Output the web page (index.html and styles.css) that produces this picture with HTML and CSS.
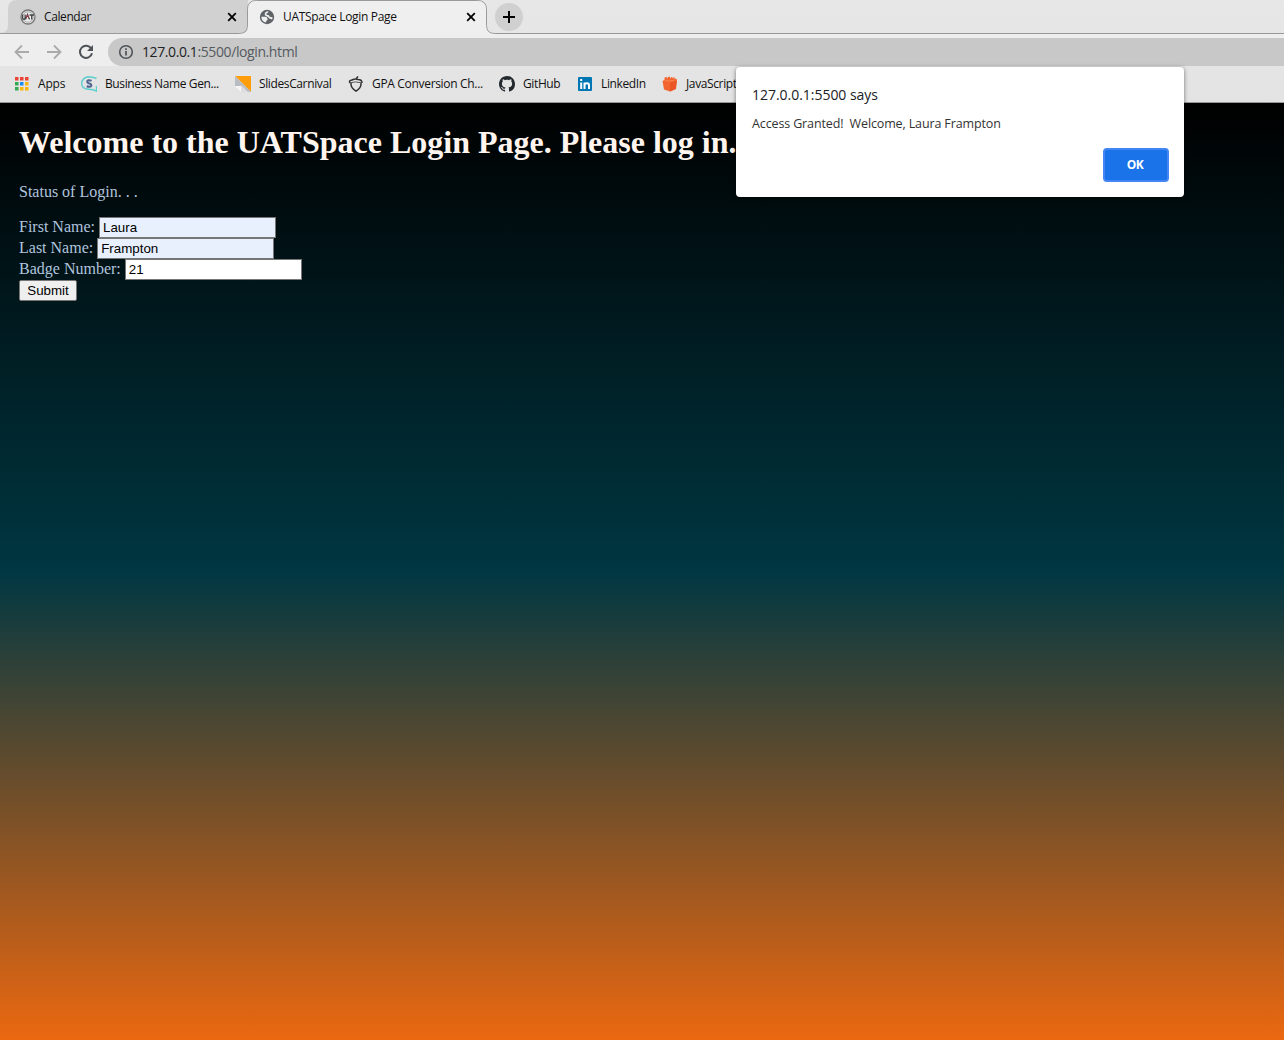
FILE: index.html
```
<!DOCTYPE html>
<html lang="en">
<head>
<meta charset="utf-8">
<title>UATSpace Login Page</title>
<link rel="stylesheet" href="styles.css">
</head>
<body>
<div class="browser">
  <header class="chrome">
    <div class="tabstrip">
      <svg class="tab-shapes" width="1284" height="34" viewBox="0 0 1284 34">
        <path class="tab-idle" d="M0 33Q8 33 8 25V9Q8 0 17 0H248V33Z"/>
        <path class="tab-live" d="M0 33.5H239.500Q247.500 33.500 247.500 25.500V9.500Q247.500 .5 256.500 .5H477.500Q486.500 .5 486.500 9.500V25.500Q486.500 33.500 494.500 33.500H1284"/>
        <path class="tab-fill" d="M240 34Q248 34 248 26V10Q248 1 257 1H477Q486 1 486 10V26Q486 34 494 34Z"/>
      </svg>
      <div class="tab tab-calendar">
        <svg class="fav" width="16" height="16" viewBox="0 0 16 16"><circle cx="8" cy="8" r="7" fill="#eee" stroke="#777" stroke-width="1.300"/><circle cx="8" cy="8" r="5.200" fill="none" stroke="#aaa"/><path d="M2.500 5.500v3q0 2 1.300 2t1.300-2v-3M5.500 10.500l2-5 2 5M9.500 6h4.500M11.700 6v4.500" fill="none" stroke="#454548" stroke-width="1.300"/><path d="M6.500 8.500l1-2.500 1 2.500" fill="none" stroke="#c5374a"/></svg>
        <span class="tab-title t-cal">Calendar</span>
        <svg class="close" width="10" height="10" viewBox="0 0 10 10"><path d="M1.200 1.200l7.600 7.600M8.800 1.200l-7.600 7.600"/></svg>
      </div>
      <div class="tab tab-login">
        <svg class="fav" width="16" height="16" viewBox="0 0 16 16"><circle cx="8" cy="8" r="7.200" fill="#5f6368"/><path fill="#eee" d="M9.300 2.300C9.500 3.600 9 4.200 8 4.300 7 4.400 7.200 5.600 8 5.700 9.800 5.900 10.300 6.400 10.500 7.600 11.300 8.300 12.600 8.200 13.700 8.200 13.700 9 13.400 9.900 13 10.600 11.500 9.800 9.800 9.700 9.200 8.300 8.500 7.200 6.200 7.300 5.800 6 5.300 4 6.900 2.300 9.300 2.300zM2.300 7.700H6C8 7.800 8.900 9.300 8.500 10.700 8.200 11.700 7.300 11.700 7.100 12.300V13.600C4.300 13.200 2.300 10.800 2.300 7.700z"/></svg>
        <span class="tab-title t-login">UATSpace Login Page</span>
        <svg class="close" width="10" height="10" viewBox="0 0 10 10"><path d="M1.200 1.200l7.600 7.600M8.800 1.200l-7.600 7.600"/></svg>
      </div>
      <div class="new-tab"><svg width="12" height="12" viewBox="0 0 12 12"><path d="M6 0v12M0 6h12" stroke="#000" stroke-width="2"/></svg></div>
    </div>
    <div class="toolbar">
      <svg class="nav" width="16" height="16" viewBox="0 0 16 16"><path d="M15 8H2M8 1.500L1.500 8 8 14.500" stroke="#aaa" stroke-width="1.800" fill="none"/></svg>
      <svg class="nav" width="16" height="16" viewBox="0 0 16 16"><path d="M1 8H14M8 1.500L14.500 8 8 14.500" stroke="#aaa" stroke-width="1.800" fill="none"/></svg>
      <svg class="nav" width="16" height="16" viewBox="0 0 16 16"><path d="M13.300 4.700A6.100 6.100 0 1 0 14 9.200" stroke="#4f5358" stroke-width="2" fill="none"/><path d="M15 1v6H9z" fill="#4f5358"/></svg>
      <div class="address">
        <svg width="16" height="16" viewBox="0 0 16 16"><circle cx="8" cy="8" r="6.300" fill="none" stroke="#4f5358" stroke-width="1.600"/><path d="M8 7v4.500M8 4.300v1.600" stroke="#4f5358" stroke-width="1.700"/></svg>
        <span class="url"><span class="host">127.0.0.1</span>:5500/login.html</span>
      </div>
    </div>
    <nav class="bookmarks">
      <a class="bm bm-apps"><svg width="14" height="14" viewBox="0 0 14 14"><path fill="#ea4335" d="M0 0h3.500v3.500H0zM5 0h3.500v3.500H5zM10 0h3.500v3.500H10z"/><path fill="#34a853" d="M0 5h3.500v3.500H0zM0 10h3.500v3.500H0z"/><path fill="#1a8cf0" d="M5 5h3.500v3.500H5z"/><path fill="#fbb60b" d="M10 5h3.500v3.500H10zM5 10h3.500v3.500H5zM10 10h3.500v3.500H10z"/></svg><span>Apps</span></a>
      <a class="bm bm-names"><svg width="16" height="16" viewBox="0 0 16 16"><path d="M15.500 2.500Q12 .8 7 .8 .7 2.400 .7 7.500T7 13.200Q12 13 15.500 15.200V10" fill="none" stroke="#5bd0cf" stroke-width="1.400"/><path d="M10.600 4.800Q6.400 3.200 6.200 5.700 6.300 7 8.300 7.400T10.400 9.300Q9.500 11.800 5.700 10.300" fill="none" stroke="#4f648f" stroke-width="2"/></svg><span>Business Name Gen...</span></a>
      <a class="bm bm-slides"><svg width="16" height="16" viewBox="0 0 16 16"><path fill="#ff9d0a" d="M0 0h16v16z"/><path fill="#b9bdc2" d="M0 0v10h6v6h10z"/><path fill="#f6f6f8" d="M0 10h6v6z"/><path fill="#dcdde1" d="M6 9v7h7z"/></svg><span>SlidesCarnival</span></a>
      <a class="bm bm-gpa"><svg width="16" height="16" viewBox="0 0 16 16"><path d="M2 7Q.5 4.500 4 4 7 2.500 10 3.500 14 3.500 14 7M3 7Q2.500 12 8 15.200 13.500 12 13 7M7.500 3.500L10 .5" fill="none" stroke="#303030" stroke-width="1.500"/><path d="M2 6.800Q7 5 13.500 6.800" fill="none" stroke="#555"/></svg><span>GPA Conversion Ch...</span></a>
      <a class="bm bm-github"><svg width="16" height="16" viewBox="0 0 16 16"><path fill="#24292e" d="M8 0C3.580 0 0 3.580 0 8c0 3.540 2.290 6.530 5.470 7.590.4.070.55-.17.55-.38 0-.19-.01-.82-.01-1.490-2.010.37-2.530-.49-2.690-.94-.09-.23-.48-.94-.82-1.130-.28-.15-.68-.52-.01-.53.63-.01 1.080.58 1.230.82.72 1.210 1.870.87 2.330.66.070-.52.28-.87.51-1.070-1.780-.2-3.640-.89-3.640-3.950 0-.87.31-1.590.82-2.150-.08-.2-.36-1.020.08-2.120 0 0 .67-.21 2.200.82.640-.18 1.320-.27 2-.27s1.360.09 2 .27c1.530-1.040 2.200-.82 2.200-.82.440 1.100.160 1.920.080 2.120.510.560.820 1.270.820 2.150 0 3.070-1.870 3.750-3.650 3.950.290.250.540.730.540 1.480 0 1.070-.01 1.930-.01 2.200 0 .21.150.46.550.38A8.010 8.010 0 0 0 16 8c0-4.420-3.580-8-8-8z"/></svg><span>GitHub</span></a>
      <a class="bm bm-linkedin"><svg width="14" height="14" viewBox="0 0 14 14"><rect width="14" height="14" rx="1" fill="#0077b5"/><path d="M3.200 5.500V12M3.200 2v2M6.500 12V5.500M6.500 8.500Q6.700 6.200 8.900 6.200T11 8.500V12" fill="none" stroke="#fff" stroke-width="2"/></svg><span>LinkedIn</span></a>
      <a class="bm bm-js"><svg width="16" height="16" viewBox="0 0 16 16"><path fill="#f26430" d="M.5 5L2.500 4V1.500L5 1V3L6 1 8 .5V2.500L9.500 1 11 2 12.500 .8V3L14.500 2.500 15 5 14 13 8 15.500 2 13.500z"/><path d="M3 4.500l4 .6 5-1" fill="none" stroke="#fb965e" stroke-width=".7"/><path fill="#ea5526" d="M8 7l6.500-2-.8 8L8 15.500z"/></svg><span>JavaScript</span></a>
    </nav>
  </header>
  <main class="page">
    <h1>Welcome to the UATSpace Login Page. Please log in.</h1>
    <p class="status">Status of Login. . .</p>
    <form class="login">
      <label class="row">First Name: <input class="field filled" type="text" value="Laura"></label>
      <label class="row">Last Name: <input class="field filled" type="text" value="Frampton"></label>
      <label class="row">Badge Number: <input class="field" type="text" value="21"></label>
      <button class="submit" type="button">Submit</button>
    </form>
  </main>
  <div class="dialog" role="alertdialog">
    <div class="dialog-title"><span>127.0.0.1:5500 says</span></div>
    <div class="dialog-text"><span>Access Granted!&nbsp; Welcome, Laura Frampton</span></div>
    <button class="ok" type="button">OK</button>
  </div>
</div>
</body>
</html>
```
FILE: styles.css
```
* { box-sizing: border-box; }
body { margin: 0; overflow: hidden; font-family: "Open Sans", sans-serif; }
svg { display: block; flex: none; }
.browser { position: relative; width: 1284px; height: 1040px; display: flex; flex-direction: column; }
.chrome { height: 103px; background: linear-gradient(#e7e7e7, #e3e3e3); border-bottom: 1px solid #999; color: #111; white-space: nowrap; }

.tabstrip { position: relative; display: flex; height: 34px; padding-left: 8px; }
.tab-shapes { position: absolute; left: 0; top: 0; }
.tab-idle { fill: #d1d1d1; }
.tab-live { fill: none; stroke: #999; }
.tab-fill { fill: #efefef; }
.tab { position: relative; display: flex; align-items: center; width: 239px; height: 33px; padding: 0 11px 0 12px; font-size: 12px; }
.tab-calendar { width: 240px; }
.tab-login { padding-left: 11px; }
.tab .fav { margin-right: 8px; }
.close { margin-left: auto; stroke: #000; stroke-width: 1.8; }
.t-cal { letter-spacing: -0.4px; }
.t-login { letter-spacing: -0.32px; }
.new-tab { position: relative; display: flex; align-items: center; justify-content: center; width: 28px; height: 28px; margin: 3px 0 0 8px; border-radius: 50%; background: #d0d0d0; }

.toolbar { display: flex; height: 32px; padding: 4px 0 0 14px; background: #eee; }
.nav { margin: 6px 16px 0 0; }
.address { display: flex; align-items: center; flex: 1; height: 28px; margin-left: -2px; padding-left: 10px; border-radius: 14px 0 0 14px; background: #c8c8c8; }
.url { margin-left: 8px; padding-bottom: 1px; font-size: 14px; color: #555a5f; letter-spacing: -0.4px; }
.host { color: #202124; }

.bookmarks { display: flex; height: 36px; padding-left: 15px; font-size: 12px; }
.bm { display: flex; align-items: center; gap: 8px; letter-spacing: -0.38px; }
.bm span { padding-bottom: 1px; }
.bm-apps { width: 66px; gap: 9px; }
.bm-apps span { letter-spacing: -0.2px; }
.bm-names { width: 154px; }
.bm-slides { width: 113px; }
.bm-gpa { width: 151px; }
.bm-gpa span { letter-spacing: -0.32px; }
.bm-github { width: 79px; }
.bm-linkedin { width: 84px; gap: 9px; }

.page { flex: 1; padding: 21px 19px; font: 16px "Liberation Serif", serif; color: #b0c4de; background: linear-gradient(#000 0%, #003742 50%, #eb6810 100%); }
h1 { margin: 0; height: 37px; font-size: 32px; line-height: 37px; color: #fff5ee; white-space: nowrap; }
.status { margin: 22px 0 16px; height: 18px; line-height: 18px; }
.login { display: flex; flex-direction: column; align-items: flex-start; }
.row { display: flex; gap: 4px; height: 21px; line-height: 20px; }
.field { width: 177px; height: 21px; padding: 1px 3px; border: 1px solid #767676; font: 13.333px "Liberation Sans", sans-serif; color: #000; background: #fff; }
.filled { background: #e8f0fe; }
.submit { width: 58px; height: 21px; padding: 0; border: 1px solid #767676; border-radius: 2px; font: 13.333px "Liberation Sans", sans-serif; color: #000; background: #efefef; }

.dialog { position: absolute; left: 736px; top: 67px; width: 448px; height: 130px; padding: 17px 15px 15px 16px; display: flex; flex-direction: column; border-radius: 4px; background: #fff; box-shadow: 0 1px 4px rgba(0, 0, 0, .5); color: #202124; white-space: nowrap; }
.dialog-title { height: 22px; line-height: 22px; font-size: 14px; letter-spacing: -0.03px; }
.dialog-text { height: 20px; margin-top: 8px; line-height: 20px; font-size: 12.5px; color: #333; letter-spacing: -0.13px; }
.ok { align-self: flex-end; width: 66px; height: 34px; margin-top: 14px; padding: 0 2px 2px 0; border: 2px solid #4285f4; border-radius: 4px; background: #1a73e8; color: #fff; font: bold 12px "Open Sans", sans-serif; letter-spacing: -0.4px; }
```
